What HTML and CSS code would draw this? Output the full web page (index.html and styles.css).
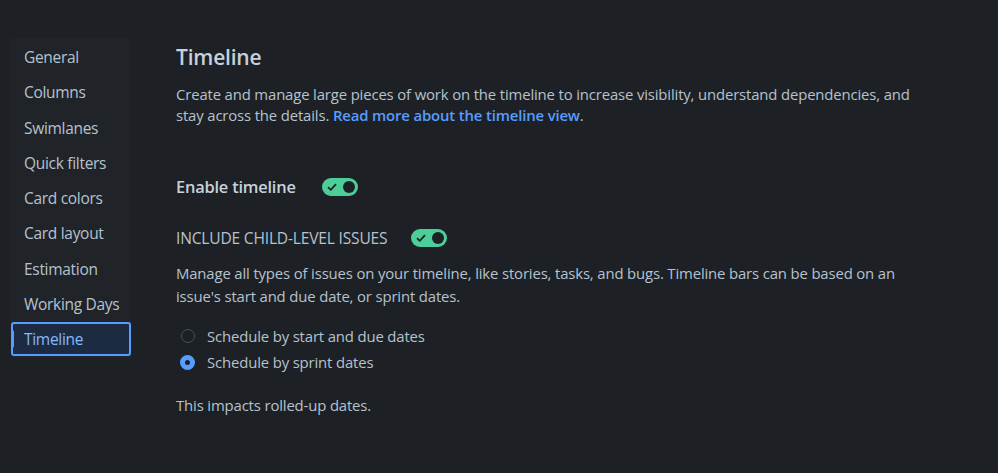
FILE: index.html
```html
<html>
	<head>
		<link rel="stylesheet" href="styles.css">
	</head>
	<body>
		<div class="page">
			<div class="nav">
				<div class="item">General</div>
				<div class="item">Columns</div>
				<div class="item">Swimlanes</div>
				<div class="item">Quick filters</div>
				<div class="item">Card colors</div>
				<div class="item">Card layout</div>
				<div class="item">Estimation</div>
				<div class="item">Working Days</div>
				<div class="item selected">Timeline</div>
			</div>

			<div class="main">
				<h1>Timeline</h1>
				<p class="desc">
					Create and manage large pieces of work on the timeline to increase visibility, understand dependencies, and<br>
					stay across the details. <a href="#">Read more about the timeline view</a>.
				</p>

				<div class="row enable">
					<span class="label">Enable timeline</span>
					<span class="toggle">
						<svg class="tick" width="10" height="8" viewBox="0 0 10 8"><path d="M1 4.2 L3.8 6.8 L9 1.2" fill="none" stroke="#1d2125" stroke-width="1.8"/></svg>
						<span class="knob"></span>
					</span>
				</div>

				<div class="row child">
					<span class="caps">INCLUDE CHILD-LEVEL ISSUES</span>
					<span class="toggle">
						<svg class="tick" width="10" height="8" viewBox="0 0 10 8"><path d="M1 4.2 L3.8 6.8 L9 1.2" fill="none" stroke="#1d2125" stroke-width="1.8"/></svg>
						<span class="knob"></span>
					</span>
				</div>

				<p class="manage">
					Manage all types of issues on your timeline, like stories, tasks, and bugs. Timeline bars can be based on an<br>
					issue's start and due date, or sprint dates.
				</p>

				<div class="radios">
					<div class="radio"><span class="dot"></span>Schedule by start and due dates</div>
					<div class="radio"><span class="dot on"></span>Schedule by sprint dates</div>
				</div>

				<p class="note">This impacts rolled-up dates.</p>
			</div>
		</div>
	</body>
</html>
```

FILE: styles.css
```css
body,
html {
	margin: 0;
	background-color: #1d2125;
	font-family: "Open Sans", "Noto Sans", sans-serif;
	color: #b6c2cf;
}

.page {
	display: flex;
	padding: 38px 0 0 11px;
}

.nav {
	display: flex;
	flex-direction: column;
	width: 120px;
	background-color: #202428;
	padding-top: 2px;
	height: 318px;
}

.item {
	font-size: 15.5px;
	height: 35.3px;
	line-height: 35px;
	padding-left: 13px;
	color: #b6c2cf;
	letter-spacing: -0.3px;
}

.item.selected {
	position: relative;
	background-color: #1c2b41;
	border: 2px solid #579dff;
	border-radius: 3px;
	height: 30px;
	line-height: 30px;
	padding-left: 11px;
	color: #85b8ff;
}

.item.selected::before {
	content: "";
	position: absolute;
	left: -2px;
	top: 6px;
	width: 3px;
	height: 18px;
	background-color: #579dff;
	border-radius: 0 2px 2px 0;
}

.main {
	margin-left: 45px;
	width: 780px;
}

h1 {
	font-size: 21px;
	font-weight: 600;
	color: #c7d1db;
	margin: 4px 0 0 0;
	line-height: 30px;
	letter-spacing: -0.2px;
}

p {
	margin: 0;
	font-size: 14.9px;
	line-height: 22px;
	letter-spacing: -0.15px;
	white-space: nowrap;
}

.desc {
	margin-top: 12px;
	line-height: 21px;
}

a {
	color: #579dff;
	font-weight: 600;
	text-decoration: none;
}

.row {
	display: flex;
	align-items: center;
}

.enable {
	margin-top: 49px;
}

.label {
	font-size: 16.4px;
	font-weight: 600;
	color: #c7d1db;
	margin-right: 26px;
	letter-spacing: -0.2px;
}

.child {
	margin-top: 29px;
}

.caps {
	font-size: 15.6px;
	font-weight: 500;
	color: #b6c2cf;
	margin-right: 24px;
	letter-spacing: -0.2px;
}

.toggle {
	position: relative;
	display: inline-flex;
	align-items: center;
	width: 36px;
	height: 18px;
	border-radius: 9px;
	background-color: #4bce97;
}

.tick {
	margin-left: 5px;
}

.knob {
	position: absolute;
	right: 3px;
	top: 3px;
	width: 12px;
	height: 12px;
	border-radius: 50%;
	background-color: #1d2125;
}

.manage {
	margin-top: 13px;
	line-height: 23px;
}

.radios {
	margin-top: 15px;
	margin-left: 5px;
}

.radio {
	display: flex;
	align-items: center;
	font-size: 14.9px;
	height: 26px;
	letter-spacing: -0.15px;
}

.dot {
	width: 14px;
	height: 14px;
	border: 1.5px solid #454f59;
	border-radius: 50%;
	margin-right: 12px;
	box-sizing: border-box;
}

.dot.on {
	border: 5px solid #579dff;
	background-color: #1d2125;
	width: 15px;
	height: 15px;
	margin-left: -1px;
	margin-right: 12px;
}

.note {
	margin-top: 19px;
}
```
